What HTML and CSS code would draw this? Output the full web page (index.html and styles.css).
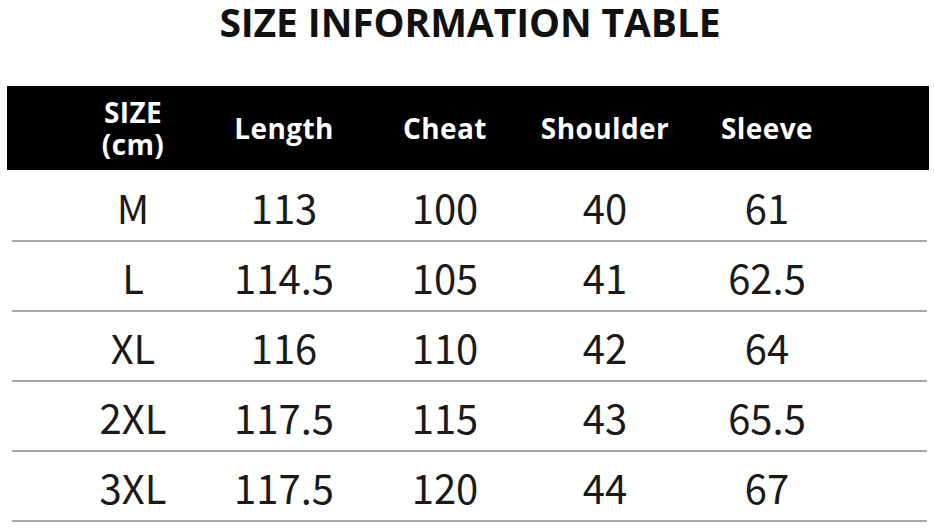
FILE: index.html
```html
<!DOCTYPE html>
<html>
<head>
<meta charset="utf-8">
<link rel="stylesheet" href="styles.css">
</head>
<body>
<div class="page">
  <h1 class="title">SIZE INFORMATION TABLE</h1>
  <div class="table">
    <div class="row head">
      <div class="cell two"><span class="line">SIZE</span><span class="line">(cm)</span></div>
      <div class="cell">Length</div>
      <div class="cell">Cheat</div>
      <div class="cell">Shoulder</div>
      <div class="cell">Sleeve</div>
    </div>
    <div class="body">
      <div class="row">
        <div class="cell">M</div><div class="cell">113</div><div class="cell">100</div><div class="cell">40</div><div class="cell">61</div>
      </div>
      <div class="row">
        <div class="cell">L</div><div class="cell">114.5</div><div class="cell">105</div><div class="cell">41</div><div class="cell">62.5</div>
      </div>
      <div class="row">
        <div class="cell">XL</div><div class="cell">116</div><div class="cell">110</div><div class="cell">42</div><div class="cell">64</div>
      </div>
      <div class="row">
        <div class="cell">2XL</div><div class="cell">117.5</div><div class="cell">115</div><div class="cell">43</div><div class="cell">65.5</div>
      </div>
      <div class="row">
        <div class="cell">3XL</div><div class="cell">117.5</div><div class="cell">120</div><div class="cell">44</div><div class="cell">67</div>
      </div>
    </div>
  </div>
</div>
</body>
</html>
```
FILE: styles.css
```css
html, body {
  margin: 0;
  padding: 0;
  background: #ffffff;
}
.page {
  width: 934px;
  height: 529px;
  overflow: hidden;
}
.title {
  margin: 0;
  height: 86px;
  box-sizing: border-box;
  padding-top: 0;
  padding-left: 6px;
  text-align: center;
  font-family: "Open Sans", "Liberation Sans", sans-serif;
  font-weight: 700;
  font-size: 39px;
  line-height: 54px;
  margin-top: -5px;
  margin-bottom: 5px;
  letter-spacing: -0.1px;
  color: #111;
}
.table {
  margin-left: 7px;
  width: 922px;
}
.body {
  padding-top: 2px;
}
.row {
  display: grid;
  grid-template-columns: 150px 152px 170px 150px 174px;
  padding-left: 46px;
  height: 68px;
  align-items: center;
  border-bottom: 2px solid #a8a8a8;
  margin-left: 5px;
  margin-right: 2px;
  font-family: "Noto Sans CJK SC", "Noto Sans", sans-serif;
  font-weight: 400;
  font-size: 40px;
  color: #1a1a1a;
}
.row .cell {
  text-align: center;
  line-height: 40px;
  padding-top: 2px;
}
.row.head {
  background: #000;
  color: #fff;
  height: 84px;
  border-bottom: none;
  margin-left: 0;
  margin-right: 0;
  padding-left: 51px;
  font-family: "Open Sans", "Liberation Sans", sans-serif;
  font-weight: 700;
  font-size: 28px;
  letter-spacing: 0.4px;
}
.row.head .cell {
  line-height: 32px;
  padding-top: 0;
}
.row.head .cell.two {
  display: flex;
  flex-direction: column;
  align-items: center;
  gap: 0;
}
.row.head .cell.two .line {
  display: block;
  height: 32px;
  line-height: 32px;
}
```
